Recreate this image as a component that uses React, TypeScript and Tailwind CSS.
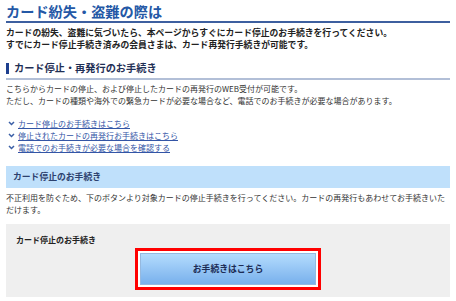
import React from "react";

const Chevron = () => (
  <svg width="7" height="5" viewBox="0 0 7 5" className="shrink-0">
    <path d="M1 1 L3.5 3.5 L6 1" fill="none" stroke="#3b5fa6" strokeWidth="1.5" />
  </svg>
);

const links = [
  "カード停止のお手続きはこちら",
  "停止されたカードの再発行お手続きはこちら",
  "電話でのお手続きが必要な場合を確認する",
];

export default function App() {
  return (
    <div
      className="w-[456px] h-[301px] overflow-hidden bg-white px-[6px] text-[#333]"
      style={{ fontFamily: '"Noto Sans CJK JP", "Noto Sans", sans-serif' }}
    >
      <div className="pt-[3px] pb-[2px] border-b-2 border-[#3d5f9f]">
        <h1 className="text-[14.2px] leading-[16px] font-bold text-[#2458a6] tracking-[0px]">
          カード紛失・盗難の際は
        </h1>
      </div>
      <p className="mt-[4px] text-[8.8px] leading-[12px] font-bold text-[#222]">
        カードの紛失、盗難に気づいたら、本ページからすぐにカード停止のお手続きを行ってください。
        <br />
        すでにカード停止手続き済みの会員さまは、カード再発行手続きが可能です。
      </p>

      <div className="mt-[10px] pb-[3px] border-b-2 border-[#b2bfd7] flex items-center gap-[5px]">
        <div className="w-[3px] h-[11px] bg-[#1e3f8e]" />
        <h2 className="text-[10.2px] leading-[14px] font-bold text-[#1f2f55]">
          カード停止・再発行のお手続き
        </h2>
      </div>
      <p className="mt-[3px] text-[8px] leading-[12px]">
        こちらからカードの停止、および停止したカードの再発行のWEB受付が可能です。
        <br />
        ただし、カードの種類や海外での緊急カードが必要な場合など、電話でのお手続きが必要な場合があります。
      </p>

      <ul className="mt-[11px] flex flex-col">
        {links.map((l) => (
          <li key={l} className="flex items-center gap-[3px] pl-[2px] h-[11.7px]">
            <Chevron />
            <a className="text-[8px] leading-[11px] text-[#3355a6] underline">{l}</a>
          </li>
        ))}
      </ul>

      <div className="mt-[13px] h-[22px] bg-[#bfe0fb] flex items-center px-[7px]">
        <span className="text-[8.8px] font-bold text-[#2c416e]">カード停止のお手続き</span>
      </div>
      <p className="mt-[4px] text-[8px] leading-[12px]">
        不正利用を防ぐため、下のボタンより対象カードの停止手続きを行ってください。カードの再発行もあわせてお手続きいただけます。
      </p>

      <div className="mt-[8px] h-[73px] bg-[#efefef] px-[10px] pt-[10px]">
        <div className="text-[8px] leading-[12px] font-bold text-[#222]">カード停止のお手続き</div>
        <div className="mt-[2px] flex justify-center">
          <div className="w-[186px] h-[42px] border-[3px] border-[#ff0000] bg-white p-[2px]">
            <button className="w-full h-full border border-[#96b9df] bg-gradient-to-b from-[#b4dcfd] to-[#78b0ec] flex items-center justify-center">
              <span className="text-[8.8px] font-bold text-[#1c2c55]">お手続きはこちら</span>
            </button>
          </div>
        </div>
      </div>
    </div>
  );
}
